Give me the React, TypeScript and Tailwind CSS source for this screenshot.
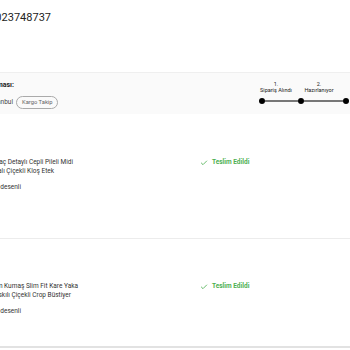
import React from 'react';
import { Check } from 'lucide-react';

const items = [
  { lines: ['Kadın Kuşaç Detaylı Cepli Pileli Midi', 'Boy Kısa Kollu Yakalı Çiçekli Kloş Etek'], ends: [73, 54], pad: 'pt-[44px] h-[125px]' },
  { lines: ['Kadın Keten Kumaş Slim Fit Kare Yaka', 'Kol Askılı Çiçekli Crop Büstiyer'], ends: [78, 71], pad: 'pt-[43px] h-[109px]' },
];

function Clip({ end, children, className }: { end: number; children: React.ReactNode; className?: string }) {
  // right-anchored text so the start runs off the left edge
  return (
    <div className={`flex justify-end whitespace-nowrap ${className ?? ''}`} style={{ width: end }}>
      {children}
    </div>
  );
}

export default function App() {
  return (
    <div className="w-[350px] h-[350px] overflow-hidden bg-white font-['Roboto',sans-serif] text-[#333]">
      <div className="h-[72px] pt-[10px]">
        <Clip end={51} className="text-[11px] leading-[15px] text-[#222]">Sipariş No: 023748737</Clip>
      </div>

      <div className="h-[42px] bg-[#fafafa] border-t border-[#efefef] flex">
        <div className="flex-1 pt-[8px]">
          <Clip end={14} className="text-[7px] font-bold leading-[9px] text-[#222]">Teslimat Bilgileri Adres Kopyalaması:</Clip>
          <div className="flex items-center mt-[6px]">
            <Clip end={13} className="text-[6.5px] leading-[9px] text-[#444]">Kadıköy / İstanbul</Clip>
            <span className="ml-[3px] h-[13px] px-[5px] rounded-full border border-[#aaa] text-[5.8px] text-[#666] flex items-center">
              Kargo Takip
            </span>
          </div>
        </div>
        <div className="w-[90px] pt-[8px]">
          <div className="flex ml-[-3px]">
            <div className="w-[38px] text-center text-[5.5px] leading-[6px] text-[#222]">1.<br />Sipariş Alındı</div>
            <div className="w-[48px] text-center text-[5.5px] leading-[6px] text-[#222]">2.<br />Hazırlanıyor</div>
          </div>
          <div className="flex items-center mt-[5px] ml-[-1px]">
            <span className="w-[6px] h-[6px] rounded-full bg-black" />
            <span className="w-[33px] h-[1.5px] bg-[#777]" />
            <span className="w-[6px] h-[6px] rounded-full bg-black" />
            <span className="w-[39px] h-[1.5px] bg-[#777]" />
            <span className="w-[6px] h-[6px] rounded-full bg-black" />
          </div>
        </div>
      </div>

      {items.map((it, i) => (
        <div key={i} className={`${it.pad} flex ${i === 0 ? 'border-b border-[#ececec]' : 'border-b-2 border-[#e2e2e2]'}`}>
          <div className="w-[200px] text-[6.5px] leading-[9px] text-[#333]">
            <Clip end={it.ends[0]}>{it.lines[0]}</Clip>
            <Clip end={it.ends[1]}>{it.lines[1]}</Clip>
            <Clip end={21} className="mt-[7px]">Renk: Yeşil çiçek desenli</Clip>
          </div>
          <div className="flex items-start gap-[4px] text-[6.5px] leading-[9px] font-bold text-[#4caf50]">
            <Check className="w-[8px] h-[8px] mt-[0.5px]" strokeWidth={2.5} />
            <span>Teslim Edildi</span>
          </div>
        </div>
      ))}
    </div>
  );
}
